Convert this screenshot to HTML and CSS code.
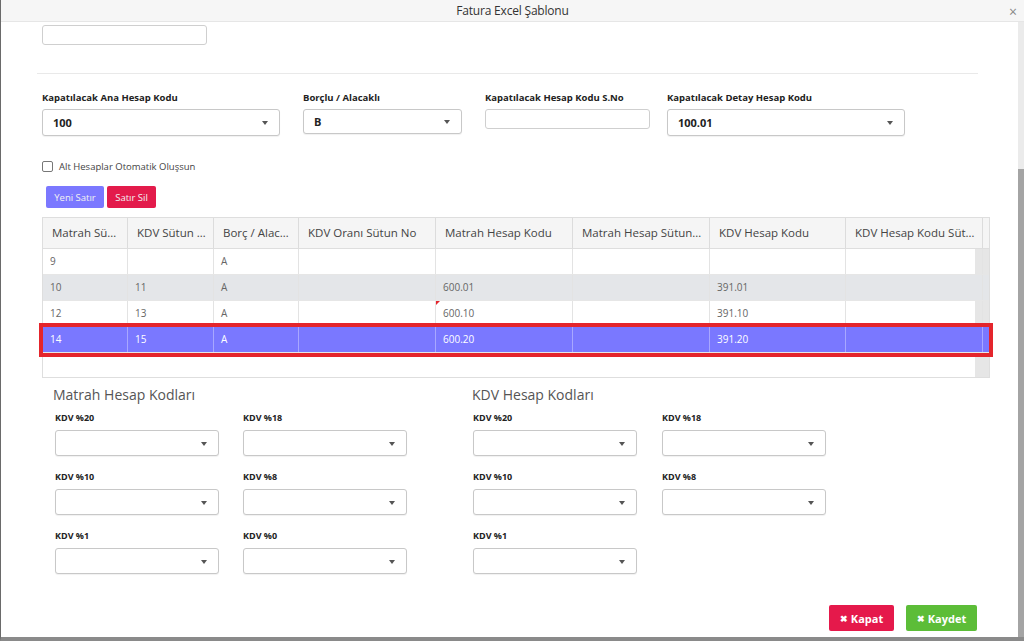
FILE: index.html
```html
<!DOCTYPE html>
<html>
<head>
    <title>Fatura Excel Şablonu</title>
    <link rel="stylesheet" href="styles.css">
</head>
<body>
    <div class="modal">
        <div class="modal-header">
            <span class="modal-title">Fatura Excel Şablonu</span>
            <span class="close">&times;</span>
        </div>
        <div class="modal-main">
            <div class="modal-body">
                <div class="text-input top-input"></div>
                <div class="divider"></div>

                <div class="field-row">
                    <div class="field">
                        <label>Kapatılacak Ana Hesap Kodu</label>
                        <div class="select sel-ana"><span>100</span></div>
                    </div>
                    <div class="field">
                        <label>Borçlu / Alacaklı</label>
                        <div class="select sel-ba"><span>B</span></div>
                    </div>
                    <div class="field">
                        <label>Kapatılacak Hesap Kodu S.No</label>
                        <div class="text-input inp-sno"></div>
                    </div>
                    <div class="field">
                        <label>Kapatılacak Detay Hesap Kodu</label>
                        <div class="select sel-detay"><span>100.01</span></div>
                    </div>
                </div>

                <div class="check-row">
                    <span class="checkbox"></span>
                    <span>Alt Hesaplar Otomatik Oluşsun</span>
                </div>

                <div class="row-buttons">
                    <button class="btn btn-purple">Yeni Satır</button>
                    <button class="btn btn-red">Satır Sil</button>
                </div>

                <div class="grid">
                    <div class="grid-head">
                        <div class="cell">Matrah Sütun No</div>
                        <div class="cell">KDV Sütun No</div>
                        <div class="cell">Borç / Alacak</div>
                        <div class="cell">KDV Oranı Sütun No</div>
                        <div class="cell">Matrah Hesap Kodu</div>
                        <div class="cell">Matrah Hesap Sütun No</div>
                        <div class="cell">KDV Hesap Kodu</div>
                        <div class="cell">KDV Hesap Kodu Sütun No</div>
                        <div class="cell filler"></div>
                    </div>
                    <div class="grid-body">
                        <div class="grid-row">
                            <div class="cell">9</div>
                            <div class="cell"></div>
                            <div class="cell">A</div>
                            <div class="cell"></div>
                            <div class="cell"></div>
                            <div class="cell"></div>
                            <div class="cell"></div>
                            <div class="cell"></div>
                        </div>
                        <div class="grid-row alt">
                            <div class="cell">10</div>
                            <div class="cell">11</div>
                            <div class="cell">A</div>
                            <div class="cell"></div>
                            <div class="cell">600.01</div>
                            <div class="cell"></div>
                            <div class="cell">391.01</div>
                            <div class="cell"></div>
                        </div>
                        <div class="grid-row">
                            <div class="cell">12</div>
                            <div class="cell">13</div>
                            <div class="cell">A</div>
                            <div class="cell"></div>
                            <div class="cell dirty">600.10</div>
                            <div class="cell"></div>
                            <div class="cell">391.10</div>
                            <div class="cell"></div>
                        </div>
                        <div class="grid-row selected">
                            <div class="cell">14</div>
                            <div class="cell">15</div>
                            <div class="cell">A</div>
                            <div class="cell"></div>
                            <div class="cell">600.20</div>
                            <div class="cell"></div>
                            <div class="cell">391.20</div>
                            <div class="cell"></div>
                        </div>
                    </div>
                </div>

                <div class="accounts">
                    <div class="account-group">
                        <h3>Matrah Hesap Kodları</h3>
                        <div class="account-fields">
                            <div class="account-field"><label>KDV %20</label><div class="select"></div></div>
                            <div class="account-field"><label>KDV %18</label><div class="select"></div></div>
                            <div class="account-field"><label>KDV %10</label><div class="select"></div></div>
                            <div class="account-field"><label>KDV %8</label><div class="select"></div></div>
                            <div class="account-field"><label>KDV %1</label><div class="select"></div></div>
                            <div class="account-field"><label>KDV %0</label><div class="select"></div></div>
                        </div>
                    </div>
                    <div class="account-group">
                        <h3>KDV Hesap Kodları</h3>
                        <div class="account-fields">
                            <div class="account-field"><label>KDV %20</label><div class="select"></div></div>
                            <div class="account-field"><label>KDV %18</label><div class="select"></div></div>
                            <div class="account-field"><label>KDV %10</label><div class="select"></div></div>
                            <div class="account-field"><label>KDV %8</label><div class="select"></div></div>
                            <div class="account-field"><label>KDV %1</label><div class="select"></div></div>
                        </div>
                    </div>
                </div>

                <div class="modal-footer">
                    <button class="btn-footer btn-close"><span class="x">&#10006;</span>Kapat</button>
                    <button class="btn-footer btn-save"><span class="x">&#10006;</span>Kaydet</button>
                </div>
            </div>
            <div class="scrollbar"><div class="thumb"></div></div>
        </div>
    </div>
</body>
</html>
```

FILE: styles.css
```css
body {
    margin: 0;
    padding: 0;
    font-family: "Open Sans", "Liberation Sans", sans-serif;
    background-color: #fff;
    width: 1024px;
    height: 641px;
    overflow: hidden;
}
.modal {
    height: 641px;
    box-sizing: border-box;
    border-left: 1px solid #6a6a6a;
    border-bottom: 4px solid #8a8a8a;
    display: flex;
    flex-direction: column;
}
.modal-header {
    height: 21px;
    background-color: #f6f6f6;
    border-bottom: 1px solid #e6e6e6;
    display: flex;
    align-items: center;
    justify-content: center;
    position: relative;
}
.modal-title {
    font-size: 12px;
    color: #333;
    letter-spacing: -0.2px;
}
.close {
    position: absolute;
    right: 7px;
    top: 2px;
    font-size: 14px;
    color: #888;
}
.modal-main {
    flex: 1;
    display: flex;
    min-height: 0;
}
.modal-body {
    flex: 1;
    min-width: 0;
    padding: 3px 41px 0 41px;
    display: flex;
    flex-direction: column;
}
.scrollbar {
    width: 6px;
    flex-shrink: 0;
    background-color: #ebebeb;
    display: flex;
    flex-direction: column;
    justify-content: flex-end;
}
.thumb {
    height: 468px;
    background-color: #a4a4a4;
}
.text-input {
    box-sizing: border-box;
    height: 20px;
    border: 1px solid #cfcfcf;
    border-radius: 3px;
    background-color: #fff;
}
.top-input {
    width: 165px;
}
.divider {
    margin: 28px 0 0 -5px;
    height: 1px;
    background-color: #e9e9e9;
    width: 941px;
}
.field-row {
    margin-top: 17px;
    display: grid;
    grid-template-columns: 261px 182px 182px 238px;
}
label {
    display: block;
    font-size: 9.5px;
    font-weight: bold;
    color: #222;
    line-height: 14px;
    margin-bottom: 4px;
}
.select {
    box-sizing: border-box;
    position: relative;
    height: 27px;
    border: 1px solid #c8c8c8;
    border-radius: 3px;
    background-color: #fff;
    box-shadow: 0 1px 1px rgba(0, 0, 0, 0.06);
    font-size: 11px;
    font-weight: bold;
    color: #222;
    display: flex;
    align-items: center;
    padding-left: 10px;
}
.select::after {
    content: "";
    position: absolute;
    right: 11px;
    top: 11px;
    border-left: 3px solid transparent;
    border-right: 3px solid transparent;
    border-top: 4px solid #555;
}
.sel-ana {
    width: 238px;
}
.sel-ba {
    width: 159px;
    height: 25px;
}
.sel-ba::after {
    top: 10px;
}
.inp-sno {
    width: 165px;
}
.sel-detay {
    width: 238px;
    margin-top: 1px;
}
.check-row {
    margin-top: 23px;
    display: flex;
    align-items: center;
    font-size: 9.5px;
    color: #444;
    height: 14px;
}
.checkbox {
    width: 9px;
    height: 9px;
    border: 1px solid #777;
    border-radius: 2px;
    margin-right: 6px;
}
.row-buttons {
    margin-top: 13px;
    padding-left: 4px;
    display: flex;
    gap: 3px;
}
.btn {
    height: 22px;
    border: none;
    border-radius: 2px;
    color: #f2f2f2;
    font-family: inherit;
    font-size: 9.5px;
    padding: 0 8px;
}
.btn-purple {
    background-color: #7b78ff;
    width: 58px;
}
.btn-red {
    background-color: #e31b4b;
    width: 49px;
}
.grid {
    margin-top: 9px;
    width: 948px;
    flex-shrink: 0;
    box-sizing: border-box;
    border: 1px solid #dedede;
}
.grid-head, .grid-row {
    display: grid;
    grid-template-columns: 85px 86px 85px 137px 137px 137px 136px 137px;
}
.grid-head {
    grid-template-columns: 85px 86px 85px 137px 137px 137px 136px 137px 6px;
    height: 30px;
    background-color: #f5f5f5;
    border-bottom: 1px solid #dedede;
}
.cell {
    box-sizing: border-box;
    border-right: 1px solid #e3e3e3;
    padding: 0 7px;
    white-space: nowrap;
    overflow: hidden;
    text-overflow: ellipsis;
    display: block;
}
.grid-head .cell {
    font-size: 11.5px;
    color: #444;
    line-height: 30px;
    padding: 0 7px 0 9px;
    border-right-color: #dcdcdc;
}
.grid-head .filler {
    border-right: none;
    padding: 0;
}
.grid-body {
    height: 128px;
    background: linear-gradient(to right, #fff 932px, #e6e6e6 932px);
}
.grid-row {
    height: 26px;
    box-sizing: border-box;
    border-bottom: 1px solid #e6e6e6;
}
.grid-row .cell {
    font-size: 10px;
    color: #666;
    line-height: 25px;
    position: relative;
}
.grid-row.alt {
    background-color: #e4e6e9;
}
.grid-row.selected {
    background-color: #7a78ff;
    outline: 4px solid #e4252c;
    position: relative;
    z-index: 1;
}
.grid-row.selected .cell {
    color: #fff;
    border-right-color: rgba(255, 255, 255, 0.35);
}
.dirty::before {
    content: "";
    position: absolute;
    left: 0;
    top: 0;
    border-top: 4px solid #e4252c;
    border-right: 4px solid transparent;
}
.accounts {
    display: grid;
    grid-template-columns: 419px 419px;
    padding-left: 11px;
    margin-top: 7px;
}
h3 {
    margin: 0;
    font-size: 14px;
    font-weight: normal;
    color: #555;
    line-height: 20px;
}
.account-fields {
    display: grid;
    grid-template-columns: 164px 164px;
    column-gap: 24px;
    row-gap: 14px;
    padding-left: 2px;
    margin-top: 6px;
}
.account-fields label {
    font-size: 9px;
    margin-bottom: 5px;
}
.account-fields .select {
    height: 26px;
}
.account-group + .account-group .account-fields {
    padding-left: 1px;
    column-gap: 25px;
}
.modal-footer {
    margin-top: auto;
    padding-bottom: 6px;
    display: flex;
    justify-content: flex-end;
    gap: 12px;
}
.btn-footer {
    height: 26px;
    border: none;
    border-radius: 2px;
    color: #fff;
    font-family: inherit;
    font-size: 11px;
    font-weight: bold;
    display: flex;
    align-items: center;
    justify-content: center;
}
.btn-footer .x {
    font-size: 9px;
    margin-right: 3px;
}
.btn-close {
    background-color: #e5194b;
    width: 65px;
}
.btn-save {
    background-color: #5cbd38;
    width: 71px;
}
```
